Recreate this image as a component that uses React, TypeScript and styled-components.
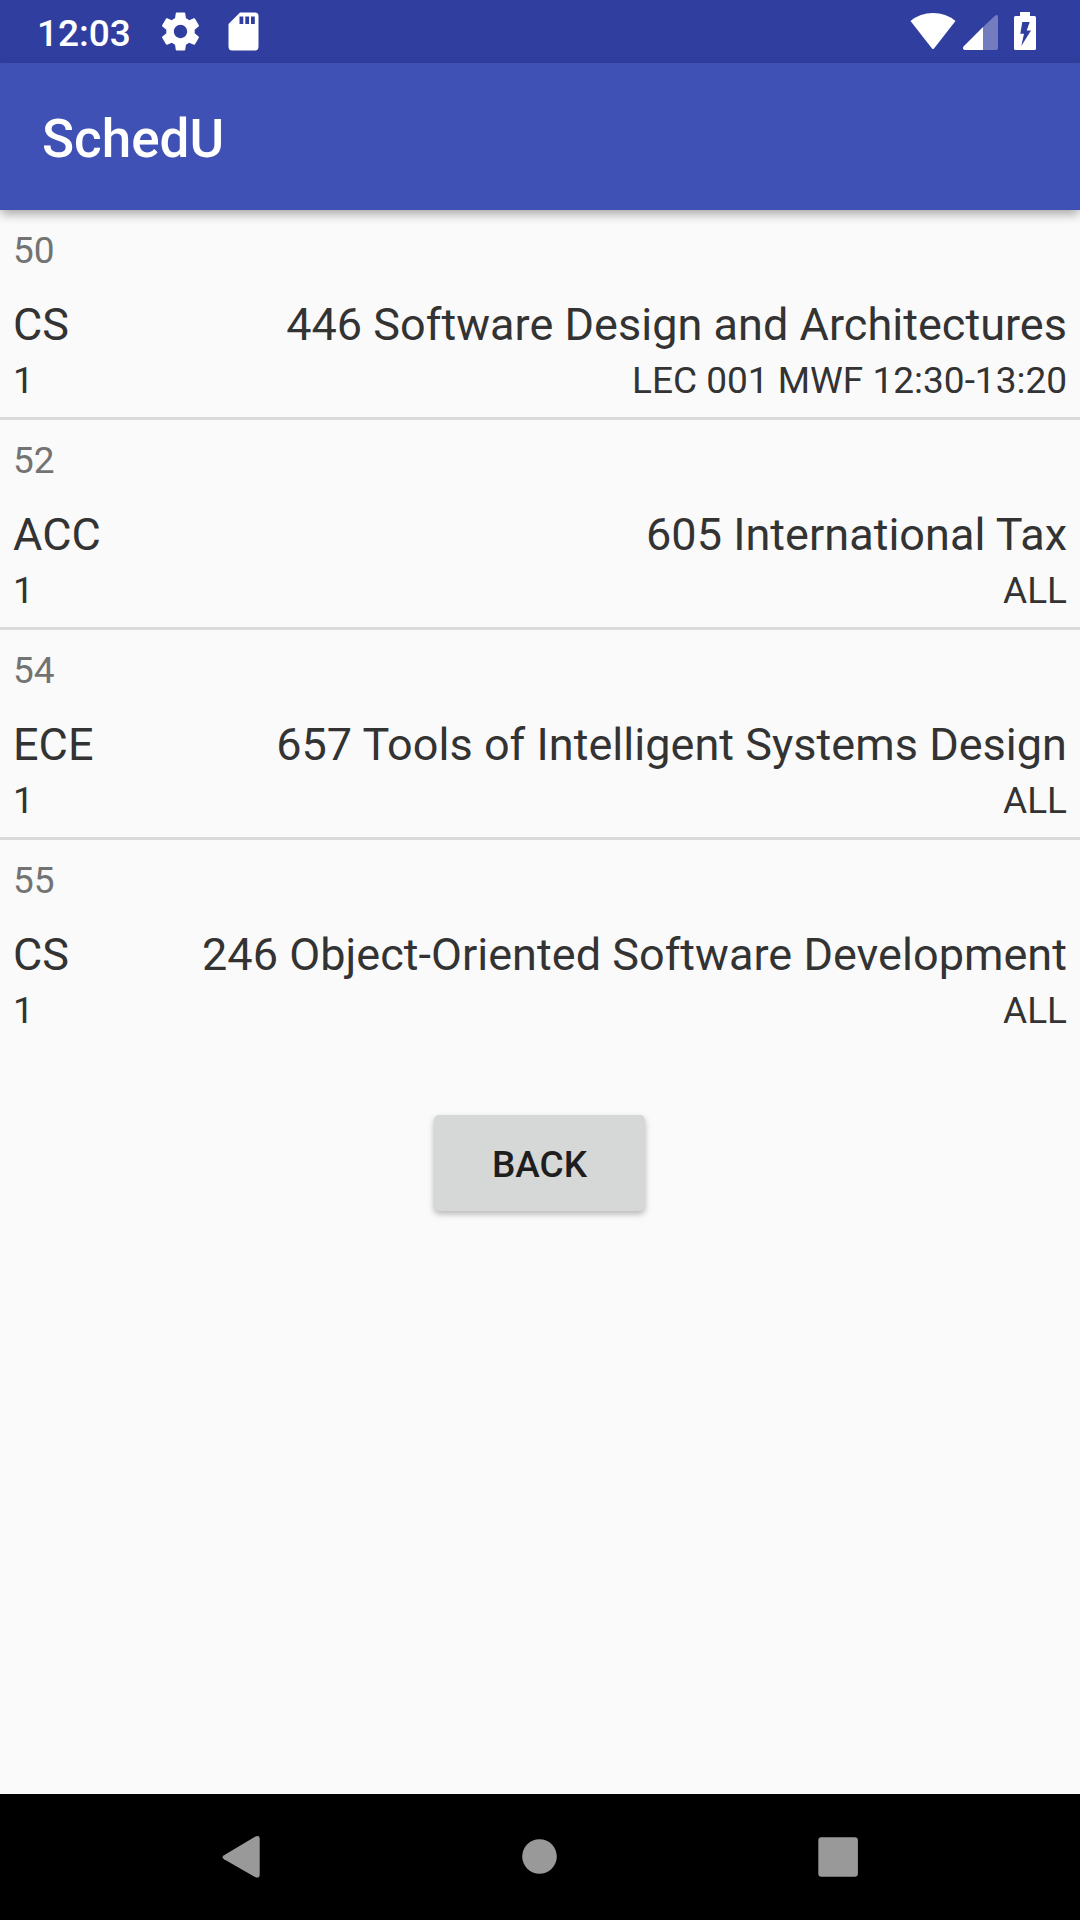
import React from "react";
import styled, { createGlobalStyle } from "styled-components";

const GlobalStyle = createGlobalStyle`
  *, *::before, *::after { box-sizing: border-box; }
  html, body { margin: 0; padding: 0; background: #fafafa; }
  body { font-family: Roboto, "Noto Sans", sans-serif; }
`;

const Screen = styled.div`
  display: flex;
  flex-direction: column;
  width: 1080px;
  height: 1920px;
  overflow: hidden;
  background: #fafafa;
`;

const StatusBar = styled.header`
  display: flex;
  flex: none;
  align-items: flex-start;
  justify-content: space-between;
  height: 63px;
  padding: 0 44px 0 37px;
  background: #303f9f;
  color: #fff;
`;

const StatusGroup = styled.div`
  display: flex;
  align-items: flex-start;
  padding-top: 12px;
`;

const Clock = styled.time`
  width: 125px;
  font-size: 37px;
  font-weight: 500;
  line-height: 43px;
`;

const StatusIcon = styled.svg<{ $w: number; $h: number; $gap?: number }>`
  display: block;
  flex: none;
  width: ${(p) => p.$w}px;
  height: ${(p) => p.$h}px;
  margin-left: ${(p) => p.$gap ?? 0}px;
  fill: currentColor;
`;

const Toolbar = styled.div`
  display: flex;
  flex: none;
  align-items: center;
  height: 147px;
  padding: 4px 42px 0;
  background: #3f51b5;
  box-shadow: 0 5px 10px -1px rgba(0, 0, 0, 0.34);
`;

const Title = styled.h1`
  margin: 0;
  color: #fff;
  font-size: 53px;
  font-weight: 500;
  line-height: 62px;
`;

const Content = styled.main`
  display: flex;
  flex: 1;
  flex-direction: column;
  align-items: center;
`;

const CourseList = styled.ul`
  width: 100%;
  margin: 0;
  padding: 0;
  list-style: none;
`;

const CourseItem = styled.li`
  height: 210px;
  padding: 19px 13px 0;
  border-bottom: 3px solid #dadada;
  color: #333;

  &:last-child {
    border-bottom-color: transparent;
  }
`;

const CourseId = styled.div`
  margin-bottom: 27px;
  color: #737373;
  font-size: 37px;
  line-height: 43px;
`;

const Line = styled.div<{ $primary?: boolean }>`
  display: flex;
  justify-content: space-between;
  margin-bottom: ${(p) => (p.$primary ? 8 : 0)}px;
  font-size: ${(p) => (p.$primary ? 45 : 37)}px;
  letter-spacing: ${(p) => (p.$primary ? "0.03px" : "normal")};
  line-height: ${(p) => (p.$primary ? 52 : 43)}px;
  white-space: nowrap;
`;

const BackButton = styled.button`
  width: 211px;
  height: 96px;
  margin: 65px 1px 0 0;
  padding: 3px 0 0;
  border: 0;
  border-radius: 5px;
  background: #d6d7d7;
  box-shadow: 0 3px 6px rgba(0, 0, 0, 0.28);
  color: #1e1e1e;
  font-family: inherit;
  font-size: 37px;
  font-weight: 500;
  line-height: 43px;
`;

const NavBar = styled.nav`
  display: flex;
  flex: none;
  align-items: center;
  justify-content: space-between;
  height: 126px;
  padding: 0 221px;
  background: #000;
`;

const NavIcon = styled.svg`
  display: block;
  width: 42px;
  height: 44px;
  fill: #999;
`;

type Course = {
  id: number;
  subject: string;
  name: string;
  priority: number;
  section: string;
};

const courses: Course[] = [
  { id: 50, subject: "CS", name: "446 Software Design and Architectures", priority: 1, section: "LEC 001 MWF 12:30-13:20" },
  { id: 52, subject: "ACC", name: "605 International Tax", priority: 1, section: "ALL" },
  { id: 54, subject: "ECE", name: "657 Tools of Intelligent Systems Design", priority: 1, section: "ALL" },
  { id: 55, subject: "CS", name: "246 Object-Oriented Software Development", priority: 1, section: "ALL" },
];

export default function App() {
  return (
    <Screen>
      <GlobalStyle />
      <StatusBar>
        <StatusGroup>
          <Clock>12:03</Clock>
          <StatusIcon $w={37} $h={39} viewBox="2.25 2 19.5 20">
            <path d="M19.43 12.98c.04-.32.07-.64.07-.98s-.03-.66-.07-.98l2.11-1.65c.19-.15.24-.42.12-.64l-2-3.46c-.12-.22-.39-.3-.61-.22l-2.49 1c-.52-.4-1.08-.73-1.69-.98l-.38-2.65C14.46 2.18 14.25 2 14 2h-4c-.25 0-.46.18-.49.42l-.38 2.65c-.61.25-1.17.59-1.69.98l-2.49-1c-.23-.09-.49 0-.61.22l-2 3.46c-.13.22-.07.49.12.64l2.11 1.65c-.04.32-.07.65-.07.98s.03.66.07.98l-2.11 1.65c-.19.15-.24.42-.12.64l2 3.46c.12.22.39.3.61.22l2.49-1c.52.4 1.08.73 1.69.98l.38 2.65c.03.24.24.42.49.42h4c.25 0 .46-.18.49-.42l.38-2.65c.61-.25 1.17-.59 1.69-.98l2.49 1c.23.09.49 0 .61-.22l2-3.46c.12-.22.07-.49-.12-.64l-2.11-1.65zM12 15.5c-1.93 0-3.5-1.57-3.5-3.5s1.57-3.5 3.5-3.5 3.5 1.57 3.5 3.5-1.57 3.5-3.5 3.5z" />
          </StatusIcon>
          <StatusIcon $w={31} $h={39} $gap={29} viewBox="0 0 31 39">
            <path
              fillRule="evenodd"
              d="M12 .5H27Q30.5.5 30.5 4V34.500Q30.500 38.500 27 38.500H4Q.5 38.500 .5 34.500V12ZM11.500 4.500V12h3.800V4.500ZM17.300 4.500V12h3.800V4.500ZM23 4.500V12h3.800V4.500Z"
            />
          </StatusIcon>
        </StatusGroup>
        <StatusGroup>
          <StatusIcon $w={46} $h={38} viewBox="0 0 46 38">
            <path d="M.5 9Q10 1 23 1T45.500 9L24 36.400Q23 37.600 22 36.400Z" />
          </StatusIcon>
          <StatusIcon $w={36} $h={38} $gap={7} viewBox="0 0 36 38">
            <path opacity="0.32" d="M20 15L32.300 3.500Q35 2 35 4.500V36Q35 38 33 38H20Z" />
            <path d="M20 15V38H1.500Q-.8 37.500 .5 34.500Z" />
          </StatusIcon>
          <StatusIcon $w={22} $h={38} $gap={15} viewBox="0 0 22 38">
            <path
              fillRule="evenodd"
              d="M6 0H16V4H20.500Q22 4 22 5.500V36.500Q22 38 20.500 38H1.500Q0 38 0 36.500V5.500Q0 4 1.500 4H6ZM8.300 10L6.300 21.700H10L7.300 34L17 18.500H12.700L15.700 10Z"
            />
          </StatusIcon>
        </StatusGroup>
      </StatusBar>
      <Toolbar>
        <Title>SchedU</Title>
      </Toolbar>
      <Content>
        <CourseList>
          {courses.map((course) => (
            <CourseItem key={course.id}>
              <CourseId>{course.id}</CourseId>
              <Line $primary>
                <span>{course.subject}</span>
                <span>{course.name}</span>
              </Line>
              <Line>
                <span>{course.priority}</span>
                <span>{course.section}</span>
              </Line>
            </CourseItem>
          ))}
        </CourseList>
        <BackButton type="button">BACK</BackButton>
      </Content>
      <NavBar>
        <NavIcon viewBox="0 0 42 44">
          <path d="M3 20.200L34 1.800Q38.700 -.5 38.700 4V39.500Q38.700 44 34 42L3 24.200Q.2 22.200 3 20.200Z" />
        </NavIcon>
        <NavIcon viewBox="0 0 42 44">
          <circle cx="20.500" cy="21.500" r="17.300" />
        </NavIcon>
        <NavIcon viewBox="0 0 42 44">
          <rect x="1.300" y="2.200" width="39.600" height="39.600" rx="3" />
        </NavIcon>
      </NavBar>
    </Screen>
  );
}
